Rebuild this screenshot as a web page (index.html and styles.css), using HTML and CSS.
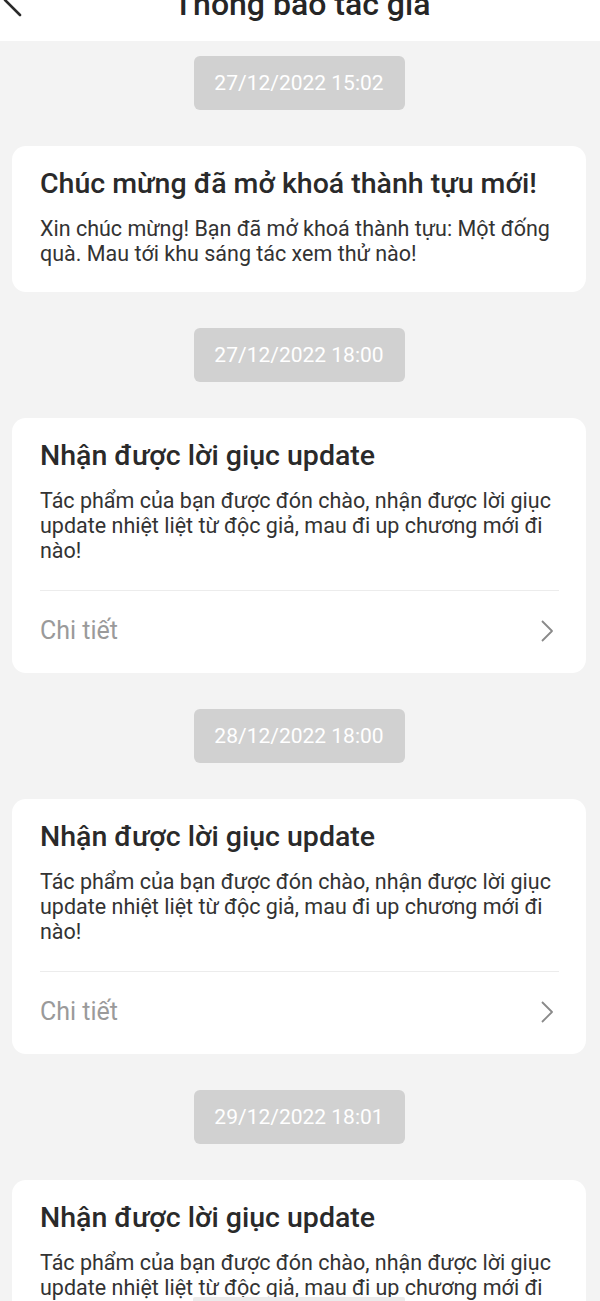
FILE: index.html
```html
<!DOCTYPE html>
<html lang="vi">
<head>
<meta charset="utf-8">
<title>Thông báo tác giả</title>
<link rel="stylesheet" href="styles.css">
</head>
<body>
<header class="topbar">
  <svg class="back" width="26" height="40" viewBox="0 0 26 40" aria-hidden="true">
    <polyline points="20,3 5,18 20,33" fill="none" stroke="#2a2a2a" stroke-width="2.6" stroke-linecap="round" stroke-linejoin="round"/>
  </svg>
  <h1 class="topbar-title">Thông báo tác giả</h1>
</header>

<main class="feed">
  <div class="stamp">27/12/2022 15:02</div>
  <article class="card">
    <h2 class="card-title">Chúc mừng đã mở khoá thành tựu mới!</h2>
    <p class="card-body">Xin chúc mừng! Bạn đã mở khoá thành tựu: Một đống quà. Mau tới khu sáng tác xem thử nào!</p>
  </article>

  <div class="stamp">27/12/2022 18:00</div>
  <article class="card card--footer">
    <h2 class="card-title">Nhận được lời giục update</h2>
    <p class="card-body">Tác phẩm của bạn được đón chào, nhận được lời giục update nhiệt liệt từ độc giả, mau đi up chương mới đi nào!</p>
    <div class="card-foot">
      <span class="more">Chi tiết</span>
      <svg class="chev" width="14" height="24" viewBox="0 0 14 24" aria-hidden="true"><polyline points="2,2 12,12 2,22" fill="none" stroke="#8a8a8a" stroke-width="1.8" stroke-linejoin="round"/></svg>
    </div>
  </article>

  <div class="stamp">28/12/2022 18:00</div>
  <article class="card card--footer">
    <h2 class="card-title">Nhận được lời giục update</h2>
    <p class="card-body">Tác phẩm của bạn được đón chào, nhận được lời giục update nhiệt liệt từ độc giả, mau đi up chương mới đi nào!</p>
    <div class="card-foot">
      <span class="more">Chi tiết</span>
      <svg class="chev" width="14" height="24" viewBox="0 0 14 24" aria-hidden="true"><polyline points="2,2 12,12 2,22" fill="none" stroke="#8a8a8a" stroke-width="1.8" stroke-linejoin="round"/></svg>
    </div>
  </article>

  <div class="stamp">29/12/2022 18:01</div>
  <article class="card card--footer">
    <h2 class="card-title">Nhận được lời giục update</h2>
    <p class="card-body">Tác phẩm của bạn được đón chào, nhận được lời giục update nhiệt liệt từ độc giả, mau đi up chương mới đi nào!</p>
    <div class="card-foot">
      <span class="more">Chi tiết</span>
      <svg class="chev" width="14" height="24" viewBox="0 0 14 24" aria-hidden="true"><polyline points="2,2 12,12 2,22" fill="none" stroke="#8a8a8a" stroke-width="1.8" stroke-linejoin="round"/></svg>
    </div>
  </article>
</main>
<div class="home-bar"></div>
</body>
</html>
```

FILE: styles.css
```css
* { box-sizing: border-box; }

html, body {
  margin: 0;
  padding: 0;
  background: #f3f3f3;
  font-family: Roboto, "Noto Sans", "Liberation Sans", sans-serif;
  color: #2b2b2b;
}

.topbar {
  position: relative;
  height: 41px;
  background: #ffffff;
  display: flex;
  justify-content: center;
  align-items: flex-start;
  overflow: hidden;
}

.back {
  position: absolute;
  left: 0;
  top: -18px;
}

.topbar-title {
  margin: -12px 0 0 4px;
  font-size: 32px;
  line-height: 32px;
  font-weight: 500;
  color: #262626;
}

.feed {
  display: flex;
  flex-direction: column;
  align-items: center;
  gap: 36px;
  padding: 15px 14px 40px 12px;
}

.stamp {
  width: 211px;
  height: 54px;
  border-radius: 6px;
  background: #d1d1d1;
  color: #ffffff;
  font-size: 21px;
  display: flex;
  align-items: center;
  justify-content: center;
  margin-left: 0;
}

.card {
  align-self: stretch;
  background: #ffffff;
  border-radius: 14px;
  padding: 20px 27px 26px 28px;
}

.card--footer {
  padding-bottom: 0;
}

.card-title {
  margin: 0;
  font-size: 28.5px;
  line-height: 36px;
  font-weight: 500;
  color: #2a2a2a;
}

.card-body {
  margin: 14px 0 0;
  font-size: 21.5px;
  line-height: 25px;
  color: #333333;
}

.card-foot {
  margin-top: 27px;
  border-top: 1px solid #ececec;
  height: 83px;
  padding-bottom: 3px;
  display: flex;
  align-items: center;
  justify-content: space-between;
}

.more {
  font-size: 25px;
  line-height: 30px;
  color: #9a9a9a;
}

.chev {
  margin-right: 5px;
}

.home-bar {
  position: fixed;
  left: 193px;
  width: 212px;
  bottom: 0;
  height: 4px;
  background: #ebebeb;
  border-radius: 2px 2px 0 0;
}
```
